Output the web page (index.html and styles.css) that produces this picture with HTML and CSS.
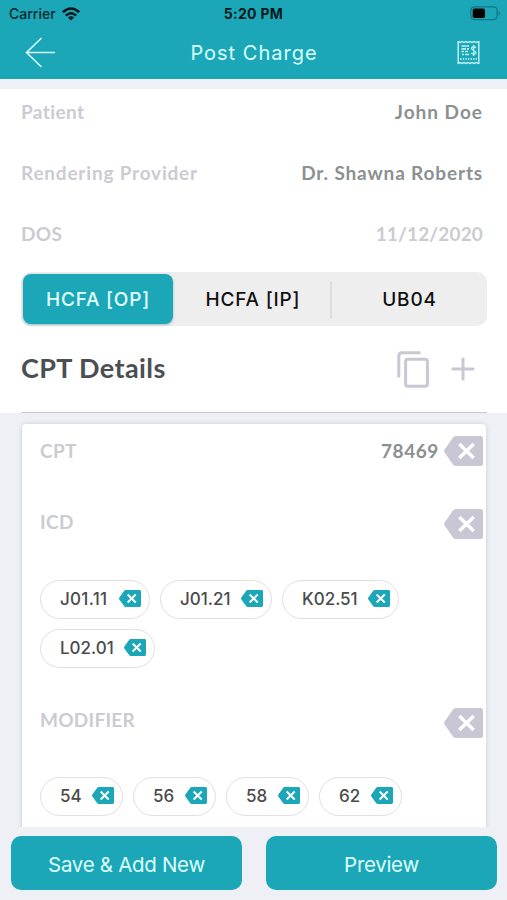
FILE: index.html
```html
<!DOCTYPE html>
<html lang="en">
<head>
<meta charset="utf-8">
<title>Post Charge</title>
<link rel="stylesheet" href="styles.css">
</head>
<body>
<svg class="defs" width="0" height="0" aria-hidden="true">
  <symbol id="delete" viewBox="0 0 39 30"><path fill="currentColor" d="M9 1.6Q10 0 12 0H36.5Q39 0 39 2.5V27.5Q39 30 36.5 30H12Q10 30 9 28.4L.6 16.6Q-.4 15 .6 13.4Z"/><path d="M15.3 8 29.7 22M29.7 8 15.3 22" stroke="#fff" stroke-width="3.5"/></symbol>
</svg>
<div class="app">
  <header class="header">
    <div class="status">
      <div class="carrier"><span>Carrier</span>
        <svg width="18" height="14" viewBox="0 0 18 14" fill="none" stroke="#06171a" stroke-width="2.6"><path d="M.9 5.3Q9-2.3 17.1 5.3M3.8 8.6Q9 3.9 14.2 8.6"/><path d="M6 10.5Q9 7.8 12 10.5L9 13.6Z" fill="#06171a" stroke="none"/></svg>
      </div>
      <span class="time">5:20 PM</span>
      <svg class="battery" width="31" height="15" viewBox="0 0 31 15"><rect x=".9" y=".9" width="26.2" height="12.8" rx="3.6" fill="none" stroke="#107783" stroke-width="1.2"/><rect x="2.7" y="2.6" width="12.3" height="9.4" rx="1.8"/><path d="M28.5 4.7Q31 7.3 28.5 9.9Z" fill="#107783"/></svg>
    </div>
    <nav class="nav">
      <svg width="31" height="31" viewBox="0 0 31 31" fill="none" stroke="#d9ffff" stroke-width="1.6"><path d="M16.5 1 1.5 15.5 16.5 30M1.5 15.5H30"/></svg>
      <h1>Post Charge</h1>
      <svg width="23" height="25" viewBox="0 0 23 25" fill="none" stroke="#bceff2"><path d="M1.2 1V24M21.8 1V24" stroke-width="1.5"/><path d="M1 1.5 3 2.5 5 1.5 7 2.5 9 1.5 11 2.5 13 1.5 15 2.5 17 1.5 19 2.5 22 1.5M1 23.5 3 22.5 5 23.5 7 22.5 9 23.5 11 22.5 13 23.5 15 22.5 17 23.5 19 22.5 22 23.5" stroke-width="1.4"/><path d="M4.5 6H12M4.5 8.8H9M10 8.8H12M4.5 11.5H7M8 11.5H11M5 14.5H7M8 14.5H12" stroke-width="1.7"/><path d="M18.8 7.7C17.5 6.2 14.6 6.5 14.6 8.5S18.9 10.1 18.9 12.4 15.7 14.4 14.2 13M16.7 5V16" stroke-width="1.4"/><path d="M3 19H20" stroke-dasharray="1.6 1" stroke-width="1.4"/></svg>
    </nav>
  </header>
  <section class="summary">
    <div class="row"><span class="label patient">Patient</span><span class="value john">John Doe</span></div>
    <div class="row"><span class="label rendering">Rendering Provider</span><span class="value doctor">Dr. Shawna Roberts</span></div>
    <div class="row"><span class="label dos">DOS</span><span class="label date">11/12/2020</span></div>
    <div class="tabs">
      <div class="tab active">HCFA [OP]</div><div class="tab inpatient">HCFA [IP]</div><div class="tab ub">UB04</div>
    </div>
    <div class="details">
      <h2>CPT Details</h2>
      <svg class="copy" width="32" height="37" viewBox="0 0 32 37" fill="none" stroke="#c8c7d3" stroke-width="3"><path d="M1.8 26.5V5Q1.8 1.7 5 1.7H23.5"/><rect x="8.6" y="8.2" width="21.8" height="27" rx="2.2"/></svg>
      <svg width="24" height="24" viewBox="0 0 24 24" stroke="#c8c7d3" stroke-width="3"><path d="M12 .7V23.5M.6 12H23.3"/></svg>
    </div>
  </section>
  <main class="scroll">
    <div class="card">
      <div class="field first"><span class="label cpt">CPT</span><span class="value code">78469</span><svg class="del"><use href="#delete"/></svg></div>
      <div class="field icd-row"><span class="label icd">ICD</span><svg class="del"><use href="#delete"/></svg></div>
      <div class="chips icd-chips">
        <div class="chip c110"><span>J01.11</span><svg><use href="#delete"/></svg></div>
        <div class="chip c112"><span>J01.21</span><svg><use href="#delete"/></svg></div>
        <div class="chip c117"><span>K02.51</span><svg><use href="#delete"/></svg></div>
        <div class="chip c115"><span>L02.01</span><svg><use href="#delete"/></svg></div>
      </div>
      <div class="field modifier-row"><span class="label modifier">MODIFIER</span><svg class="del"><use href="#delete"/></svg></div>
      <div class="chips modifier-chips">
        <div class="chip c83"><span>54</span><svg><use href="#delete"/></svg></div>
        <div class="chip c83"><span>56</span><svg><use href="#delete"/></svg></div>
        <div class="chip c83"><span>58</span><svg><use href="#delete"/></svg></div>
        <div class="chip c83"><span>62</span><svg><use href="#delete"/></svg></div>
      </div>
    </div>
  </main>
  <footer class="actions"><button class="save">Save &amp; Add New</button><button class="preview">Preview</button></footer>
</div>
</body>
</html>
```
FILE: styles.css
```css
* { box-sizing: border-box; }
body { margin: 0; background: #eff0f6; font-family: Lato, sans-serif; }
svg { display: block; flex: none; }
.defs { position: absolute; }
h1, h2 { margin: 0; }
.app { width: 507px; height: 900px; overflow: hidden; display: flex; flex-direction: column; }
.header { height: 79px; background: #1ba7b7; flex: none; }
.status { height: 27px; display: grid; grid-template-columns: 1fr auto 1fr; align-items: center; padding: 0 6px 0 9px; font: 500 14px Inter, sans-serif; color: #06282d; }
.carrier { display: flex; gap: 6px; align-items: center; }
.time { font-weight: 700; color: #05191c; letter-spacing: .3px; margin-right: 3px; }
.battery { justify-self: end; }
.nav { height: 50px; padding: 0 27px 0 25px; display: flex; align-items: center; justify-content: space-between; }
.nav h1 { font: 400 20px Inter, sans-serif; letter-spacing: 1px; color: #d9ffff; margin-left: -5px; padding-top: 1px; }
.summary { margin-top: 10px; height: 324px; flex: none; background: #fff; padding: 0 20px 0 21px; }
.row { height: 61px; padding: 12px 4px 0 0; line-height: 21px; display: flex; justify-content: space-between; }
.label, .value { font-size: 19px; font-weight: 700; white-space: nowrap; }
.label { color: #cbcbd2; letter-spacing: .35px; }
.value { color: #8b9091; letter-spacing: .85px; }
.patient { letter-spacing: .4px; }
.rendering { letter-spacing: .8px; }
.john { letter-spacing: 1px; }
.date { letter-spacing: .15px; }
.label.modifier { letter-spacing: .25px; }
.code { letter-spacing: .6px; }
.tabs { height: 54px; background: #eee; border-radius: 10px; padding: 2px; display: grid; grid-template-columns: 150px 157px 1fr; font: 450 19px/52px Inter, sans-serif; letter-spacing: .8px; text-align: center; }
.tab { color: #111; border-radius: 8px; height: 50px; }
.inpatient { padding-left: 3px; }
.active { color: #e3ffff; background: #1ba7b7; box-shadow: 0 1px 3px #9bbdc2; }
.ub { position: relative; padding-left: 4px; }
.ub::before { content: ""; position: absolute; left: 0; top: 7px; height: 38px; width: 1.5px; background: #ddd; }
.details { height: 87px; display: flex; align-items: center; border-bottom: 1.5px solid #c8c8d0; padding-right: 12px; gap: 22px; }
.details h2 { margin-right: auto; padding-bottom: 3px; font-size: 27px; letter-spacing: .4px; font-weight: 700; color: #4b4f52; }
.scroll { height: 414px; overflow: hidden; padding: 11px 20px 0 22px; }
.card { height: 430px; background: #fff; border-radius: 4px; box-shadow: 0 0 5px #c9cad3; padding: 12px 3px 0 18px; margin-right: 1px; }
.field { display: flex; height: 30px; align-items: center; }
.field .label { margin-right: auto; }
.first .label, .first .value { padding-bottom: 2px; }
.del { width: 39px; height: 30px; margin-left: 5px; color: #c8c7d3; }
.icd-row { margin-top: 43px; }
.icd-row .label, .modifier-row .label { padding-bottom: 6px; }
.chips { display: flex; flex-wrap: wrap; gap: 10px; margin-top: 41px; }
.modifier-chips { margin-top: 40px; }
.chip { height: 39px; border: 1px solid #e0e0e0; border-radius: 20px; display: flex; align-items: center; justify-content: space-between; padding: 0 8px 2px 19px; font: 450 17px Inter, sans-serif; color: #4b4b4b; }
.chip svg { width: 22px; height: 17px; color: #1ba7b7; }
.c110 { width: 110px; letter-spacing: .3px; }
.c112 { width: 112px; }
.c117 { width: 117px; }
.c115 { width: 115px; }
.c83 { width: 83px; }
.modifier-row { margin-top: 39px; }
.modifier-row .del { margin-top: 1px; }
.actions { height: 73px; padding: 9px 10px 0 11px; display: flex; justify-content: space-between; flex: none; }
.actions button { width: 231px; height: 54px; border: 0; border-radius: 10px; background: #1ba7b7; color: #ddffff; font: 400 20.5px Inter, sans-serif; letter-spacing: -.3px; padding: 2px 0 0; }
```
